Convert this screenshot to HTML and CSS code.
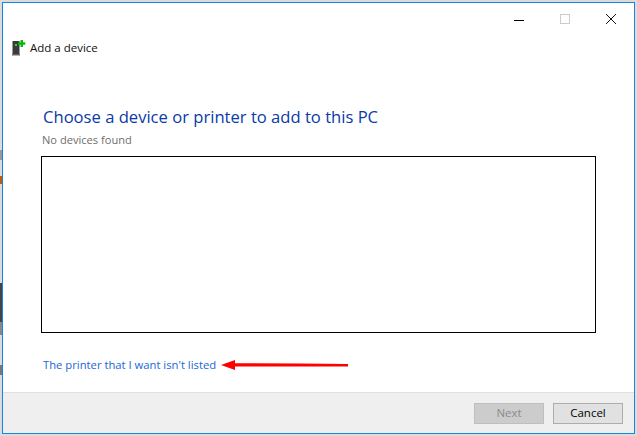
FILE: index.html
```html
<!DOCTYPE html>
<html lang="en">
<head>
<meta charset="utf-8">
<title>Add a device</title>
<link rel="stylesheet" href="styles.css">
</head>
<body>
<div class="window">
  <div class="controls">
    <svg class="ctl" width="46" height="14" viewBox="0 0 46 14"><path d="M18 8.500h10" stroke="#000" fill="none"/></svg>
    <svg class="ctl" width="46" height="14" viewBox="0 0 46 14"><rect x="18.500" y="2.500" width="9" height="9" stroke="#ccc" fill="none"/></svg>
    <svg class="ctl" width="46" height="14" viewBox="0 0 46 14"><path d="M18 2l10 10M28 2L18 12" stroke="#111" fill="none"/></svg>
  </div>
  <div class="head">
    <svg class="icon" width="14" height="16" viewBox="0 0 14 16">
      <path d="M.5 1h7v13h-7z" fill="#3a3a3a"/>
      <path d="M0 14h8v1.500H0z" fill="#666"/>
      <path d="M3 4h2v2H3z" fill="#22e022"/>
      <path d="M8.500 0h2.500v2.300h2.300v2.500H11V7H8.500V4.800H6.200V2.300h2.300z" fill="#0cb80c"/>
    </svg>
    <span class="head-title">Add a device</span>
  </div>
  <main class="content">
    <h1 class="title">Choose a device or printer to add to this PC</h1>
    <p class="status">No devices found</p>
    <div class="list"></div>
    <div class="link-row">
      <a class="link">The printer that I want isn't listed</a>
      <svg class="arrow" width="128" height="12" viewBox="0 0 128 12">
        <path d="M0 6L14 1V4.200L80 4.500L127 5V7.500L14 7.500V11Z" fill="#ff0000"/>
      </svg>
    </div>
  </main>
  <footer class="footer">
    <button class="btn btn-disabled" disabled>Next</button>
    <button class="btn">Cancel</button>
  </footer>
</div>
</body>
</html>
```

FILE: styles.css
```css
* { box-sizing: border-box; }
html, body { margin: 0; height: 100%; }
body {
  width: 637px;
  height: 436px;
  overflow: hidden;
  padding: 2px;
  font-family: "Open Sans", "Noto Sans", sans-serif;
  background-color: #dcdcdc;
  background-image:
    linear-gradient(to bottom,
      #dcdcdc 0 150px, #999 150px 160px, #dcdcdc 160px 176px, #c05a10 176px 184px,
      #dcdcdc 184px 283px, #444 283px 322px, #888 322px 335px, #dcdcdc 335px 365px,
      #777 365px 375px, #dcdcdc 375px);
  background-size: 2px 100%;
  background-repeat: no-repeat;
}
.window {
  width: 633px;
  height: 432px;
  border: 1px solid #1585e0;
  background: #fff;
  display: flex;
  flex-direction: column;
}
.controls {
  display: flex;
  justify-content: flex-end;
  height: 30px;
  padding: 9px 0 0;
}
.ctl { display: block; }
.head {
  display: flex;
  align-items: center;
  gap: 4px;
  padding-left: 9px;
  height: 20px;
  margin-top: 5px;
}
.icon { display: block; flex: none; }
.head-title { font-size: 11.500px; color: #111; margin-bottom: 2px; }
.content {
  flex: 1;
  padding: 0 38px;
  display: flex;
  flex-direction: column;
}
.title {
  margin: 47px 0 0 2px;
  font-size: 16.600px;
  line-height: 24px;
  font-weight: 400;
  color: #0a3aa8;
}
.status {
  margin: 3px 0 0 1px;
  font-size: 11.100px;
  line-height: 16px;
  color: #6e6e6e;
}
.list {
  margin-top: 8px;
  height: 177px;
  border: 1px solid #000;
  background: #fff;
}
.link-row {
  display: flex;
  align-items: center;
  gap: 5px;
  margin: 23px 0 0 2px;
  height: 17px;
}
.link { font-size: 11.250px; color: #1a66d8; }
.arrow { display: block; flex: none; }
.footer {
  height: 41px;
  background: #efefef;
  border-top: 1px solid #dfdfdf;
  display: flex;
  justify-content: flex-end;
  align-items: center;
  gap: 9px;
  padding-right: 11px;
}
.btn {
  width: 70px;
  height: 21px;
  padding: 0 0 1px;
  border: 1px solid #adadad;
  background: #e1e1e1;
  font-family: inherit;
  font-size: 11.500px;
  color: #000;
}
.btn-disabled {
  background: #cccccc;
  border-color: #bfbfbf;
  color: #8a8a8a;
}
```
